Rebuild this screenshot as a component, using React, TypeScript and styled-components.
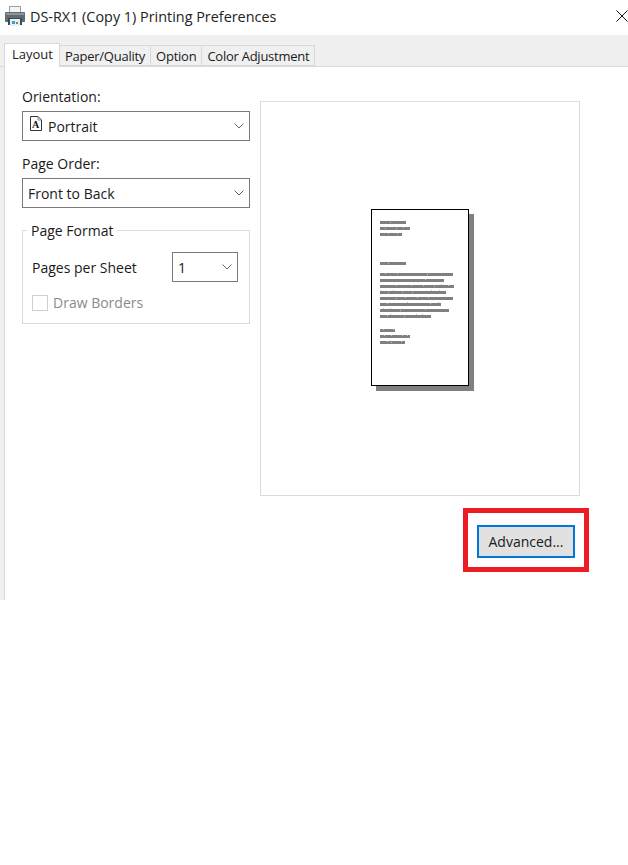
import * as React from 'react';
import styled, { createGlobalStyle } from 'styled-components';

const GlobalStyle = createGlobalStyle`
  html, body {
    margin: 0;
    padding: 0;
    background: #fff;
  }
  body {
    font-family: 'Open Sans', 'Noto Sans', sans-serif;
    font-size: 14px;
    color: #1a1a1a;
  }
`;

const tabs = ['Layout', 'Paper/Quality', 'Option', 'Color Adjustment'];

// y offset and width of every text line on the thumbnail page
const pageLines = [
  [12, 26], [18, 30], [24, 22],
  [53, 26],
  [64, 73], [70, 64], [76, 74], [82, 66], [88, 73], [94, 61], [100, 69], [106, 51],
  [120, 15], [126, 30], [132, 25],
];

// light flecks left in the thumbnail bars by the downscale, x/y on the page
const pageFlecks = [
  [19, 13], [14, 19], [25, 19], [32, 18], [17, 24], [26, 24], [17, 54],
  [14, 64], [26, 64], [56, 65], [54, 70], [25, 76], [40, 76], [52, 76], [63, 77],
  [70, 75], [77, 76], [10, 81], [17, 83], [22, 81], [31, 83], [41, 83], [60, 81],
  [68, 81], [25, 89], [34, 88], [46, 88], [57, 88], [16, 94], [36, 93], [59, 94],
  [67, 93], [12, 99], [19, 99], [29, 101], [54, 100], [16, 106], [19, 105], [33, 107],
  [45, 105], [51, 105], [12, 120], [22, 120], [13, 126], [20, 126], [31, 126],
  [36, 126], [16, 132], [20, 133], [30, 132],
];

export default function App() {
  return (
    <>
      <GlobalStyle />
      <Dialog>
        <TitleBar>
          <PrinterIcon />
          <Title>DS-RX1 (Copy 1) Printing Preferences</Title>
          <CloseIcon />
        </TitleBar>

        <TabStrip>
          {tabs.map((tab, i) => (
            <Tab key={tab} $active={i === 0}>
              {tab}
            </Tab>
          ))}
        </TabStrip>

        <Body>
          <Content>
            <Settings>
              <FieldLabel>Orientation:</FieldLabel>
              <Select>
                <SelectValue $gap={6}>
                  <PortraitIcon />
                  Portrait
                </SelectValue>
                <Chevron />
              </Select>

              <FieldLabel $spaced>Page Order:</FieldLabel>
              <Select>
                <SelectValue>Front to Back</SelectValue>
                <Chevron />
              </Select>

              <Group>
                <Legend>Page Format</Legend>
                <SheetRow>
                  <span>Pages per Sheet</span>
                  <SmallSelect>
                    <SelectValue>1</SelectValue>
                    <Chevron />
                  </SmallSelect>
                </SheetRow>
                <CheckRow>
                  <CheckBox />
                  Draw Borders
                </CheckRow>
              </Group>
            </Settings>

            <PreviewColumn>
              <Preview>
                <Thumbnail />
              </Preview>
              <Highlight>
                <AdvancedButton>Advanced...</AdvancedButton>
              </Highlight>
            </PreviewColumn>
          </Content>
        </Body>
      </Dialog>
    </>
  );
}

const PrinterIcon = () => (
  <svg width="20" height="20" viewBox="0 0 20 20" style={{ flex: 'none' }}>
    <rect x="4.5" y="0.5" width="11" height="7" fill="#f4f4f4" stroke="#a0a0a0" />
    <rect x="0" y="6" width="20" height="10" rx="1" fill="#626c70" />
    <rect x="1" y="7" width="18" height="2" fill="#8d979b" />
    <rect x="3" y="12" width="14" height="7" fill="#3f4a4e" />
    <rect x="5" y="13" width="10" height="7" fill="#e3f0f5" />
    <rect x="7" y="15" width="3" height="3" fill="#3f9fd0" />
    <rect x="11" y="16" width="2" height="2" fill="#7a8a5a" />
  </svg>
);

const CloseIcon = () => (
  <svg width="12" height="12" viewBox="0 0 12 12">
    <path d="M0.5 0.5 11.5 11.5 M11.5 0.5 0.5 11.5" stroke="#111" strokeWidth="1" fill="none" />
  </svg>
);

const Chevron = () => (
  <svg width="10" height="6" viewBox="0 0 10 6" style={{ flex: 'none' }}>
    <path d="M0.5 0.5 5 5 9.5 0.5" stroke="#666" strokeWidth="1" fill="none" />
  </svg>
);

const PortraitIcon = () => (
  <svg width="12" height="15" viewBox="0 0 12 15" style={{ flex: 'none', marginBottom: 5 }}>
    <path d="M0.5 0.5H8L11.5 4V14.5H0.5Z" fill="#fff" stroke="#333" />
    <path d="M8 0.5V4H11.5" fill="none" stroke="#888" />
    <text x="5.7" y="12" textAnchor="middle" fontFamily="'Liberation Serif', serif" fontWeight="700" fontSize="10" fill="#111">
      A
    </text>
  </svg>
);

const Thumbnail = () => (
  <svg width="104" height="183" viewBox="0 0 104 183">
    <rect x="5" y="5" width="98" height="177" fill="#808080" />
    <rect x="0.5" y="0.5" width="97" height="176" fill="#fff" stroke="#000" />
    {pageLines.map(([y, w]) => (
      <rect key={y} x="9" y={y} width={w} height="3" fill="#808080" />
    ))}
    {pageFlecks.map(([x, y]) => (
      <rect key={`${x}-${y}`} x={x} y={y} width="1" height="1" fill="#c4c4c4" />
    ))}
  </svg>
);

const Dialog = styled.div`
  height: 600px;
  display: flex;
  flex-direction: column;
`;

const TitleBar = styled.div`
  height: 35px;
  display: flex;
  align-items: center;
  padding: 0 0 3px 5px;
  box-sizing: border-box;
  gap: 5px;
`;

const Title = styled.div`
  flex: 1;
  font-size: 14.4px;
  color: #222;
`;

const TabStrip = styled.div`
  height: 32px;
  box-sizing: border-box;
  background: #f0f0f0;
  border-bottom: 1px solid #d9d9d9;
  padding: 8px 0 0 4px;
  display: flex;
  align-items: flex-end;
`;

const Tab = styled.div<{ $active?: boolean }>`
  box-sizing: border-box;
  height: ${(p) => (p.$active ? '24px' : '21px')};
  margin-bottom: ${(p) => (p.$active ? '-1px' : '0')};
  padding: ${(p) => (p.$active ? '0 6px 3px 7px' : '0 5px')};
  display: flex;
  align-items: center;
  font-size: 13px;
  letter-spacing: ${(p) => (p.$active ? '0' : '-0.25px')};
  background: ${(p) => (p.$active ? '#fff' : '#f0f0f0')};
  border: 1px solid #d9d9d9;
  border-bottom: ${(p) => (p.$active ? 'none' : '1px solid #d9d9d9')};
  border-left: ${(p) => (p.$active ? '1px solid #d9d9d9' : 'none')};
  position: relative;
`;

const Body = styled.div`
  flex: 1;
  display: flex;
  background: #f0f0f0;
  padding-left: 4px;
`;

const Content = styled.div`
  flex: 1;
  display: flex;
  background: #fff;
  border-left: 1px solid #d9d9d9;
  padding: 21px 39px 0 17px;
  gap: 10px;
`;

const Settings = styled.div`
  width: 228px;
  flex: none;
`;

const FieldLabel = styled.div<{ $spaced?: boolean }>`
  height: 23px;
  line-height: 17px;
  margin-top: ${(p) => (p.$spaced ? '14px' : '0')};
`;

const Select = styled.div`
  height: 30px;
  box-sizing: border-box;
  border: 1px solid #7a7a7a;
  padding: 0 5px;
  display: flex;
  align-items: center;
  justify-content: space-between;
`;

const SmallSelect = styled(Select)`
  width: 66px;
`;

const SelectValue = styled.span<{ $gap?: number }>`
  display: flex;
  align-items: center;
  gap: ${(p) => p.$gap ?? 5}px;
  padding-left: ${(p) => (p.$gap ? 2 : 0)}px;
`;

const Group = styled.div`
  position: relative;
  margin-top: 22px;
  height: 94px;
  box-sizing: border-box;
  border: 1px solid #dcdcdc;
  padding: 21px 11px 0 9px;
`;

const Legend = styled.span`
  position: absolute;
  top: -10px;
  left: 4px;
  padding: 0 4px;
  background: #fff;
`;

const SheetRow = styled.div`
  display: flex;
  align-items: center;
  justify-content: space-between;
`;

const CheckRow = styled.div`
  margin-top: 11px;
  display: flex;
  align-items: center;
  gap: 5px;
  color: #8a8a8a;
`;

const CheckBox = styled.span`
  width: 16px;
  height: 16px;
  box-sizing: border-box;
  border: 1px solid #cfcfcf;
`;

const PreviewColumn = styled.div`
  flex: 1;
  display: flex;
  flex-direction: column;
  align-items: flex-end;
  padding-top: 13px;
`;

const Preview = styled.div`
  align-self: stretch;
  margin-right: 9px;
  height: 395px;
  box-sizing: border-box;
  border: 1px solid #dcdcdc;
  padding: 107px 0 0 110px;
`;

const Highlight = styled.div`
  margin-top: 12px;
  width: 126px;
  height: 64px;
  box-sizing: border-box;
  border: 5px solid #ed1c24;
  padding: 12px 9px 9px;
`;

const AdvancedButton = styled.div`
  height: 33px;
  box-sizing: border-box;
  border: 2px solid #0078d7;
  background: #e1e1e1;
  display: flex;
  align-items: center;
  justify-content: center;
`;
